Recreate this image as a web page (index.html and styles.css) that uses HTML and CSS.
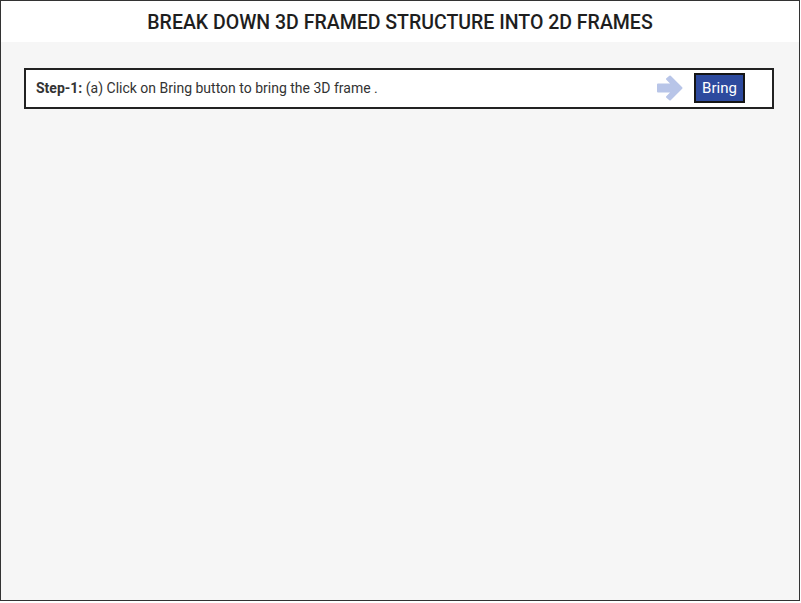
FILE: index.html
```html
<!DOCTYPE html>
<html>
<head>
<meta charset="utf-8">
<link rel="stylesheet" href="styles.css">
</head>
<body>
<div class="app">
  <header class="title">BREAK DOWN 3D FRAMED STRUCTURE INTO 2D FRAMES</header>
  <main class="content">
    <div class="step">
      <p class="step-text"><b>Step-1:</b> (a) Click on Bring button to bring the 3D frame .</p>
      <svg class="arrow" width="28" height="26" viewBox="0 0 28 26"><path d="M2 9.5 H16.5 L11 4 L14 1.5 L25.5 13 L14 24.5 L11 22 L16.5 16.5 H2 Z" fill="#b8c5e8" stroke="#b8c5e8" stroke-width="2" stroke-linejoin="round"/></svg>
      <button class="bring">Bring</button>
    </div>
  </main>
</div>
</body>
</html>
```

FILE: styles.css
```css
html, body {
  margin: 0;
  padding: 0;
  background: #ffffff;
}
.app {
  width: 800px;
  height: 601px;
  box-sizing: border-box;
  border: 1px solid #333;
  display: flex;
  flex-direction: column;
  font-family: Roboto, "Liberation Sans", sans-serif;
  background: #f6f6f6;
}
.title {
  height: 41px;
  background: #ffffff;
  display: flex;
  align-items: center;
  justify-content: center;
  font-size: 19.5px;
  font-weight: 500;
  color: #1e1e1e;
  padding-top: 1px;
  box-sizing: border-box;
}
.content {
  flex: 1;
  padding: 26px 25px 0 23px;
}
.step {
  height: 41px;
  box-sizing: border-box;
  border: 2px solid #222;
  background: #fff;
  display: flex;
  align-items: center;
  padding: 0 27px 1px 10px;
}
.step-text {
  margin: 0;
  flex: 1;
  font-size: 14px;
  color: #333;
}
.step-text b {
  font-weight: 700;
  color: #333;
}
.arrow {
  margin-right: 10px;
  display: block;
}
.bring {
  width: 51px;
  height: 30px;
  box-sizing: border-box;
  border: 2px solid #151515;
  background: #2d4a9e;
  color: #fff;
  font-family: Roboto, "Liberation Sans", sans-serif;
  font-size: 15px;
  padding: 0 0 1px 0;
  border-radius: 0;
}
```
